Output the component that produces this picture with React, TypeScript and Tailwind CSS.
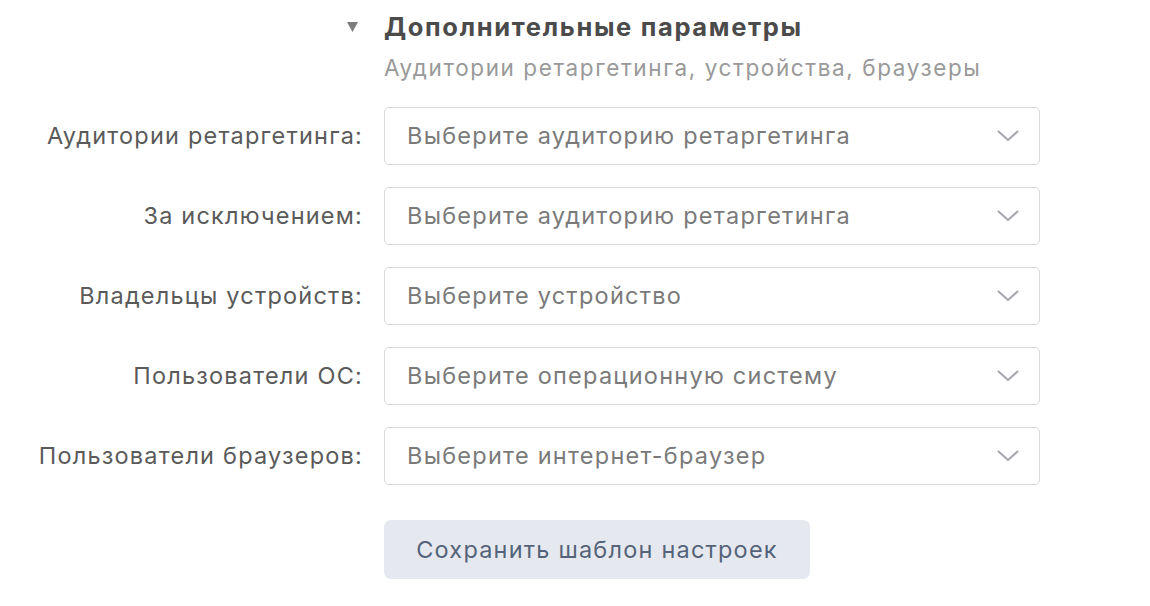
import React from "react";

const rows = [
  ["Аудитории ретаргетинга:", "Выберите аудиторию ретаргетинга"],
  ["За исключением:", "Выберите аудиторию ретаргетинга"],
  ["Владельцы устройств:", "Выберите устройство"],
  ["Пользователи ОС:", "Выберите операционную систему"],
  ["Пользователи браузеров:", "Выберите интернет-браузер"],
];

function Chevron() {
  return (
    <svg width="22" height="12" viewBox="0 0 22 12" fill="none">
      <path d="M1.5 1.5 L11 10 L20.5 1.5" stroke="#a3a6ab" strokeWidth="2" strokeLinecap="round" strokeLinejoin="round" />
    </svg>
  );
}

export default function App() {
  return (
    <div className="w-[1150px] h-[606px] bg-white overflow-hidden" style={{ fontFamily: "Inter, 'Noto Sans', sans-serif" }}>
      <div className="flex flex-col pt-[10px]">
        <div className="flex">
          <div className="w-[384px] flex justify-end pr-[26px] pt-[12px]">
            <svg width="11" height="10" viewBox="0 0 11 10">
              <path d="M0 0 H11 L5.5 10 Z" fill="#7d7d7d" />
            </svg>
          </div>
          <div className="flex flex-col">
            <div className="text-[25.5px] font-bold text-[#4b4b4b] leading-[34px] tracking-[1.65px] whitespace-nowrap">Дополнительные параметры</div>
            <div className="text-[22.5px] text-[#999] leading-[28px] mt-[10px] tracking-[1.6px] whitespace-nowrap">Аудитории ретаргетинга, устройства, браузеры</div>
          </div>
        </div>
        <div className="flex flex-col gap-[22px] mt-[25px]">
          {rows.map(([label, ph]) => (
            <div key={label} className="flex items-center">
              <div className="w-[363px] text-right text-[23.5px] text-[#5a5a5a] tracking-[1.2px] whitespace-nowrap">{label}</div>
              <div className="ml-[21px] w-[656px] h-[58px] border border-[#d7d9dc] rounded-[5px] flex items-center justify-between pl-[22px] pr-[20px]">
                <span className="text-[23.5px] text-[#7a7a7a] tracking-[1.25px] whitespace-nowrap">{ph}</span>
                <Chevron />
              </div>
            </div>
          ))}
        </div>
        <div className="flex mt-[35px]">
          <div className="w-[384px]" />
          <button className="w-[426px] h-[59px] rounded-[7px] bg-[#e5e9ef] text-[23.5px] text-[#55637a] tracking-[1.2px] whitespace-nowrap">Сохранить шаблон настроек</button>
        </div>
      </div>
    </div>
  );
}
